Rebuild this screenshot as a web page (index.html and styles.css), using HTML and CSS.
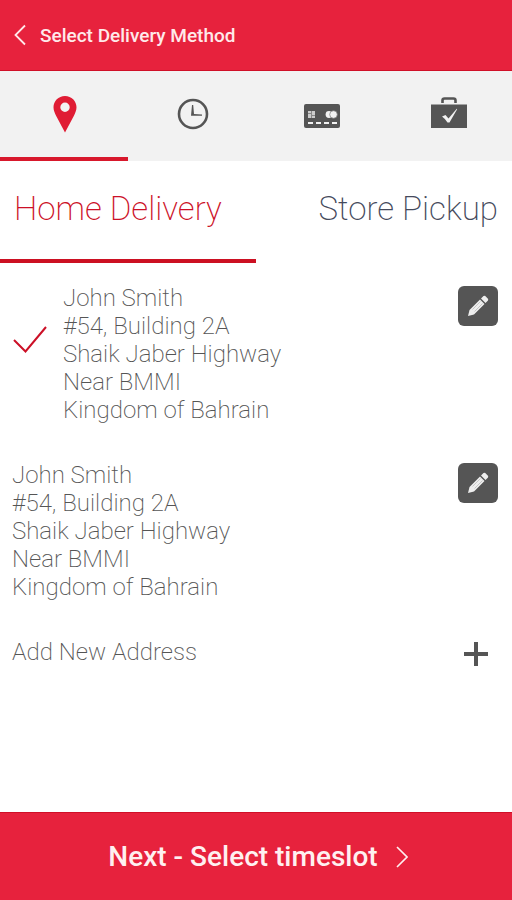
FILE: index.html
```
<!DOCTYPE html>
<html lang="en">
<head>
    <meta charset="UTF-8">
    <meta name="viewport" content="width=device-width, initial-scale=1">
    <title>Select Delivery Method</title>
    <link rel="stylesheet" href="styles.css">
</head>
<body>
    <header class="header">
        <button class="back" type="button" aria-label="Back">
            <svg width="12" height="22" viewBox="0 0 12 22"><path d="M11 1.500 1.500 11l9.500 9.500" fill="none" stroke="currentColor" stroke-width="1.800"/></svg>
        </button>
        <h1>Select Delivery Method</h1>
    </header>

    <!-- checkout steps -->
    <nav class="steps">
        <a class="step active" href="#delivery" aria-label="Delivery">
            <svg width="24" height="38" viewBox="0 0 24 38"><path fill="currentColor" fill-rule="evenodd" d="M12 1C5.500 1 .5 6 .5 12.300c0 3 1.200 5.700 2.700 8.700L12 37.500 20.800 21c1.500-3 2.700-5.700 2.700-8.700C23.500 6 18.500 1 12 1zm0 6.500a4.700 4.700 0 1 1 0 9.400A4.700 4.700 0 0 1 12 7.500z"/></svg>
        </a>
        <a class="step" href="#time" aria-label="Timeslot">
            <svg width="32" height="32" viewBox="0 0 32 32"><circle cx="16" cy="16" r="14" fill="none" stroke="currentColor" stroke-width="2.600"/><path fill="currentColor" d="M15 7h1.200l.8 9 8 .6v1.200H14z"/></svg>
        </a>
        <a class="step" href="#payment" aria-label="Payment">
            <svg class="card-icon" width="36" height="24" viewBox="0 0 36 24"><rect width="36" height="24" rx="2" fill="currentColor"/><path fill="#ccc" d="M4 7h7v7H4z"/><path d="M4 9.500h3M8 11.500h3M7.500 7v7" stroke="#777" stroke-width=".8"/><circle cx="25" cy="10.500" r="3.400" fill="#f2f2f2"/><circle cx="29.500" cy="10.500" r="3.800" fill="#f2f2f2" stroke="#777" stroke-width=".7"/><path d="M4 19h29" stroke="#f2f2f2" stroke-width="2" stroke-dasharray="5 3"/></svg>
        </a>
        <a class="step" href="#confirm" aria-label="Confirmation">
            <svg class="case-icon" width="38" height="32" viewBox="0 0 38 32"><path d="M12.500 7V4.500q0-2 2-2h9q2 0 2 2V7" fill="none" stroke="currentColor" stroke-width="2.600"/><path fill="currentColor" d="M1 8.500h36V32H1z"/><path d="M12 20.500l3.500-1.500 3 3.500 8-9.500q.8-.5.500.5L19.500 26.500h-2q-2-3.500-5.500-6z" fill="#f2f2f2"/></svg>
        </a>
    </nav>

    <nav class="tabs">
        <a class="tab active" href="#home">Home Delivery</a>
        <a class="tab" href="#store">Store Pickup</a>
    </nav>

    <main>
        <section class="address">
            <svg class="tick" width="35" height="28" viewBox="0 0 35 28"><path d="M2 15 13.500 26.500 34 2" fill="none" stroke="currentColor" stroke-width="2"/></svg>
            <address>
                John Smith<br>
                #54, Building 2A<br>
                Shaik Jaber Highway<br>
                Near BMMI<br>
                Kingdom of Bahrain
            </address>
            <button class="edit" type="button" aria-label="Edit address">
                <svg width="22" height="22" viewBox="0 0 22 22"><path fill="#eee" d="M1 21l1.500-6L13 4.500l4.500 4.500L7 19.500zM14 3.500l2.500-2.500 1.500-.2 3.200 3.200-.2 1.500L18.500 8z"/><path d="M5.500 14.500l8-8M7.500 16.500l8-8" stroke="#bbb" stroke-width=".8"/></svg>
            </button>
        </section>

        <section class="address">
            <address>
                John Smith<br>
                #54, Building 2A<br>
                Shaik Jaber Highway<br>
                Near BMMI<br>
                Kingdom of Bahrain
            </address>
            <button class="edit" type="button" aria-label="Edit address">
                <svg width="22" height="22" viewBox="0 0 22 22"><path fill="#eee" d="M1 21l1.500-6L13 4.500l4.500 4.500L7 19.500zM14 3.500l2.500-2.500 1.500-.2 3.200 3.200-.2 1.500L18.500 8z"/><path d="M5.500 14.500l8-8M7.500 16.500l8-8" stroke="#bbb" stroke-width=".8"/></svg>
            </button>
        </section>

        <button class="add" type="button">
            Add New Address
            <svg width="24" height="24" viewBox="0 0 24 24"><path d="M12 0v24M0 12h24" stroke="#555" stroke-width="4"/></svg>
        </button>
    </main>

    <button class="next" type="button">
        Next - Select timeslot
        <svg width="12" height="22" viewBox="0 0 12 22"><path d="M1 1l10 10L1 21" fill="none" stroke="currentColor" stroke-width="1.600"/></svg>
    </button>
</body>
</html>
```

FILE: styles.css
```
* {
    box-sizing: border-box;
}

body {
    margin: 0;
    min-height: 100vh;
    display: flex;
    flex-direction: column;
    background: #fff;
    color: #555;
    font-family: Roboto, "Liberation Sans", sans-serif;
}

svg {
    display: block;
    flex-shrink: 0;
}

a {
    color: inherit;
    text-decoration: none;
}

button {
    border: 0;
    padding: 0;
    background: none;
    color: inherit;
    font-family: inherit;
    cursor: pointer;
}

/* top bar */
.header {
    display: flex;
    align-items: center;
    gap: 14px;
    height: 71px;
    padding: 0 14px;
    background: #e7223d;
    border-bottom: 1px solid #d01028;
    color: #ffe9ea;
}

.header h1 {
    margin: 0;
    font-size: 19px;
    font-weight: 500;
}

.steps {
    display: grid;
    grid-template-columns: repeat(4, 1fr);
    height: 90px;
    background: #f2f2f2;
}

.step {
    display: flex;
    align-items: center;
    justify-content: center;
    padding-left: 2px;
    border-bottom: 4px solid transparent;
}

.step.active {
    color: #e01c34;
    border-color: #d8182c;
}

.card-icon {
    margin: 4px 0 0 2px;
}

.case-icon {
    margin-bottom: 4px;
}

/* home delivery / store pickup */
.tabs {
    display: grid;
    grid-template-columns: 1fr 1fr;
    height: 102px;
    font-size: 33px;
    font-weight: 200;
    line-height: 40px;
    white-space: nowrap;
}

.tab {
    padding: 28px 14px 0;
    border-bottom: 4px solid transparent;
    color: #454a5c;
    text-align: right;
}

.tab.active {
    color: #cc1027;
    border-color: #cc1022;
    text-align: left;
}

main {
    flex: 1;
    padding: 21px 14px 0 12px;
    font-size: 24px;
    font-weight: 200;
    line-height: 28px;
}

.address {
    display: flex;
    align-items: flex-start;
    margin-bottom: 37px;
}

.address address {
    flex: 1;
    font-style: normal;
}

.tick {
    margin: 41px 16px 0 0;
    color: #cc1027;
}

.edit {
    display: flex;
    align-items: center;
    justify-content: center;
    width: 40px;
    height: 40px;
    margin-top: 2px;
    border-radius: 6px;
    background: #555;
}

.add {
    display: flex;
    align-items: center;
    justify-content: space-between;
    width: 100%;
    padding-right: 10px;
    font-size: 24px;
    font-weight: 200;
    line-height: 28px;
}

.add svg {
    margin-top: 4px;
}

/* bottom bar */
.next {
    display: flex;
    align-items: center;
    justify-content: center;
    gap: 18px;
    height: 88px;
    padding-left: 4px;
    background: #e7223d;
    border-top: 1px solid #d01028;
    color: #fff0f0;
    font-size: 28px;
    font-weight: 500;
}
```
